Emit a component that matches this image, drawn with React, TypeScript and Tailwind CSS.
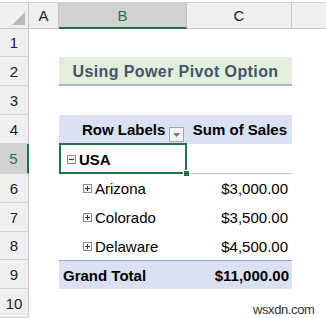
import React from "react";

const F = { fontFamily: '"Liberation Sans", Arial, sans-serif' };

function RowHdr({ n, h, sel }: { n: number; h: number; sel?: boolean }) {
  return (
    <div
      className={
        "w-[29px] shrink-0 flex items-center justify-center text-[15px] border-b border-[#d4d4d4] " +
        (sel
          ? "bg-[#d2d2d2] text-[#217346] border-r-2 border-r-[#217346]"
          : "bg-[#efefef] text-[#222] border-r border-r-[#c6c6c6]")
      }
      style={{ height: h }}
    >
      <span className="pt-[2px]">{n}</span>
    </div>
  );
}

function PlusBox({ minus }: { minus?: boolean }) {
  return (
    <svg width="9" height="9" viewBox="0 0 9 9" className="shrink-0">
      <rect x="0.5" y="0.5" width="8" height="8" fill="#f4f4f4" stroke="#8c8c8c" />
      <line x1="2" y1="4.5" x2="7" y2="4.5" stroke="#333" />
      {!minus && <line x1="4.5" y1="2" x2="4.5" y2="7" stroke="#333" />}
    </svg>
  );
}

export default function App() {
  const hs = [28, 29, 29, 29, 30, 29, 29, 28, 29, 29];
  const rows: React.ReactNode[] = [];

  const blank = (
    <>
      <div className="w-[30px] shrink-0" />
      <div className="w-[128px] shrink-0" />
      <div className="w-[105px] shrink-0" />
      <div className="w-[34px] shrink-0" />
    </>
  );

  const content: Record<number, React.ReactNode> = {
    2: (
      <>
        <div className="w-[30px] shrink-0" />
        <div className="w-[233px] shrink-0 bg-[#e2efda] border-b-2 border-[#a5b8d6] flex items-center justify-center text-[16px] font-bold text-[#44546a] tracking-[0.4px] pt-[2px]">
          Using Power Pivot Option
        </div>
        <div className="w-[34px] shrink-0" />
      </>
    ),
    4: (
      <>
        <div className="w-[30px] shrink-0" />
        <div className="relative w-[128px] shrink-0 bg-[#d9e1f2] flex items-center pl-[23px] text-[15px] font-bold text-black pt-[2px]">
          Row Labels
          <div className="absolute right-[3px] bottom-[2px] w-[15px] h-[15px] bg-[#f3f3f3] border border-[#a8a8a8] flex items-center justify-center">
            <svg width="7" height="4" viewBox="0 0 7 4">
              <path d="M0 0 L7 0 L3.5 4 Z" fill="#7a7a7a" />
            </svg>
          </div>
        </div>
        <div className="w-[105px] shrink-0 bg-[#d9e1f2] flex items-center justify-end pr-[5px] text-[15px] font-bold text-black pt-[2px]">
          Sum of Sales
        </div>
        <div className="w-[34px] shrink-0" />
      </>
    ),
    5: (
      <>
        <div className="w-[30px] shrink-0" />
        <div className="relative w-[128px] shrink-0 flex items-center pl-[8px] text-[15px] font-bold text-black">
          <div className="absolute left-0 top-[-1px] right-0 bottom-0 border-2 border-[#217346]" />
          <div className="absolute right-[-3px] bottom-[-3px] w-[7px] h-[7px] bg-[#217346] border border-white" />
          <PlusBox minus />
          <span className="ml-[3px] pt-[2px]">USA</span>
        </div>
        <div className="w-[105px] shrink-0 border-b border-[#b4c6e7]" />
        <div className="w-[34px] shrink-0" />
      </>
    ),
  };

  const states: [number, string, string][] = [
    [6, "Arizona", "$3,000.00"],
    [7, "Colorado", "$3,500.00"],
    [8, "Delaware", "$4,500.00"],
  ];
  states.forEach(([r, name, val]) => {
    content[r] = (
      <>
        <div className="w-[30px] shrink-0" />
        <div className="w-[128px] shrink-0 flex items-center pl-[24px] text-[15px] text-black">
          <PlusBox />
          <span className="ml-[3px] pt-[2px]">{name}</span>
        </div>
        <div className="w-[105px] shrink-0 flex items-center justify-end pr-[4px] text-[15px] text-black pt-[2px]">
          {val}
        </div>
        <div className="w-[34px] shrink-0" />
      </>
    );
  });

  content[9] = (
    <>
      <div className="w-[30px] shrink-0" />
      <div className="w-[128px] shrink-0 bg-[#d9e1f2] border-t border-[#8ea9db] flex items-center pl-[4px] text-[15px] font-bold text-black pt-[2px]">
        Grand Total
      </div>
      <div className="w-[105px] shrink-0 bg-[#d9e1f2] border-t border-[#8ea9db] flex items-center justify-end pr-[3px] text-[15px] font-bold text-black pt-[2px]">
        $11,000.00
      </div>
      <div className="w-[34px] shrink-0" />
    </>
  );

  for (let i = 1; i <= 10; i++) {
    rows.push(
      <div key={i} className="flex" style={{ height: hs[i - 1] }}>
        <RowHdr n={i} h={hs[i - 1]} sel={i === 5} />
        {content[i] ?? blank}
      </div>
    );
  }

  return (
    <div className="relative w-[326px] h-[318px] bg-white overflow-hidden" style={F}>
      <div className="h-[3px] bg-white border-b border-[#cfcfcf]" />
      <div className="flex h-[26px] text-[15px]">
        <div className="relative w-[29px] shrink-0 bg-[#efefef] border-r border-b border-[#c6c6c6]">
          <svg width="13" height="13" viewBox="0 0 13 13" className="absolute left-[12px] top-[9px]">
            <path d="M13 0 L13 13 L0 13 Z" fill="#b9b9b9" />
          </svg>
        </div>
        <div className="w-[30px] shrink-0 bg-[#efefef] border-r border-b border-[#c6c6c6] flex items-center justify-center text-[#222] pt-[2px]">
          A
        </div>
        <div className="w-[128px] shrink-0 bg-[#d2d2d2] border-r border-[#c6c6c6] border-b-2 border-b-[#217346] flex items-center justify-center text-[#217346] pt-[3px]">
          B
        </div>
        <div className="w-[105px] shrink-0 bg-[#efefef] border-r border-b border-[#c6c6c6] flex items-center justify-center text-[#222] pt-[2px]">
          C
        </div>
        <div className="w-[34px] shrink-0 bg-[#efefef] border-b border-[#c6c6c6]" />
      </div>
      {rows}
      <div className="absolute left-[253px] top-[300px] text-[13px] tracking-[-0.4px] text-[#333]">
        wsxdn.com
      </div>
    </div>
  );
}
